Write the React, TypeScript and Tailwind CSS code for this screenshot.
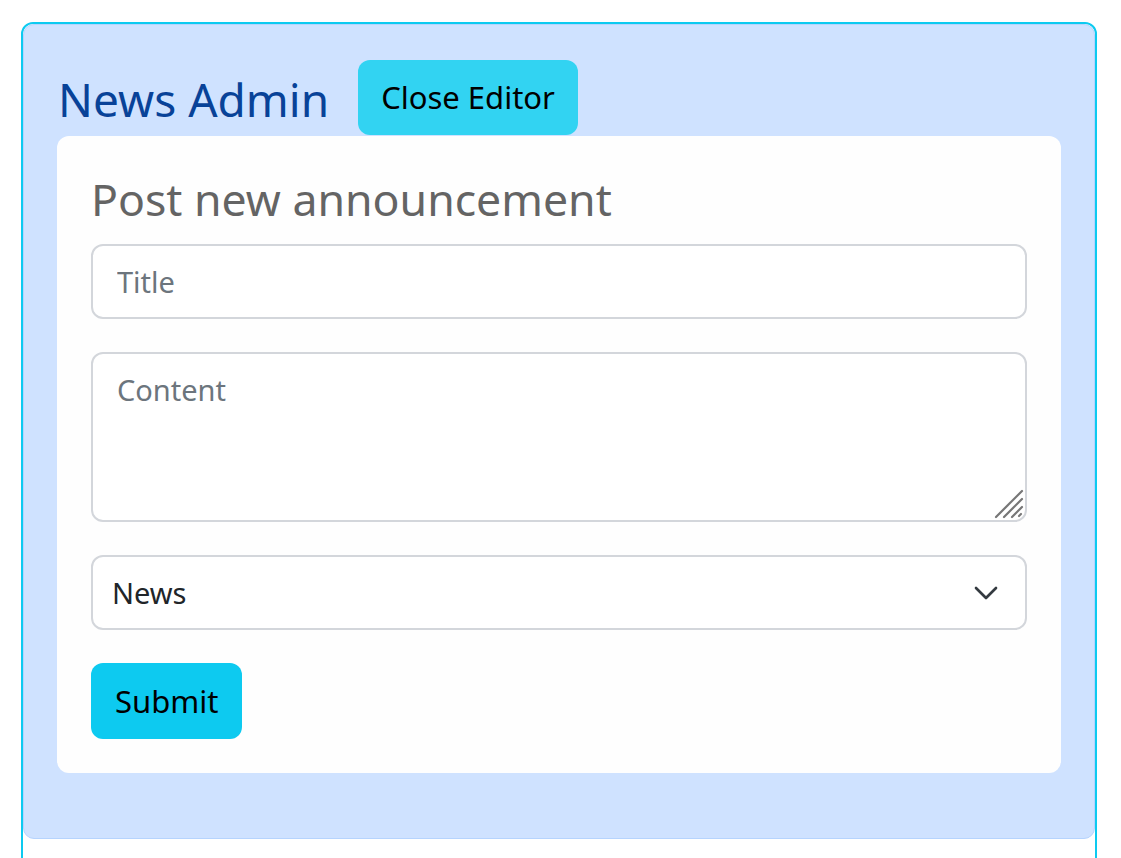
import { useState } from 'react';

const font = { fontFamily: '"Noto Sans", "Open Sans", sans-serif' };

function ResizeGrip() {
  return (
    <svg
      className="pointer-events-none absolute right-[3px] bottom-[3px]"
      width="30"
      height="30"
      viewBox="0 0 30 30"
    >
      <g stroke="#777" strokeWidth="2.2" strokeLinecap="round">
        <line x1="2" y1="28" x2="28" y2="2" />
        <line x1="10" y1="28" x2="28" y2="10" />
        <line x1="18" y1="28" x2="28" y2="18" />
        <line x1="25" y1="27" x2="27" y2="25" />
      </g>
    </svg>
  );
}

export default function App() {
  const [category, setCategory] = useState('News');

  return (
    <div className="h-[858px] bg-white overflow-hidden" style={font}>
      <div className="ml-[21px] mt-[22px] w-[1076px] h-[850px] rounded-[12px] border-2 border-[#0dcaf0]">
        <div className="rounded-[11px] border border-[#b6d4fe] bg-[#cfe2ff] px-[33px] pt-[32px] pb-[65px]">
          <div className="flex items-end h-[79px]">
            <h2 className="text-[#084298] text-[46px] leading-none pb-[14px] pl-[1px]">News Admin</h2>
            <button className="ml-[29px] mb-[1px] h-[75px] px-[23px] rounded-[12px] bg-[#32d3f2] text-black text-[31px]">
              Close Editor
            </button>
          </div>
          <div className="rounded-[12px] bg-[#fefefe] p-[34px]">
            <h3 className="text-[#646464] text-[44.6px] leading-[58px] mb-[16px]">Post new announcement</h3>
            <div className="flex flex-col gap-[33px]">
              <input
                placeholder="Title"
                className="h-[75px] w-full rounded-[12px] border-2 border-[#d3d6db] bg-white px-[24px] text-[29px] text-[#212529] placeholder:text-[#6c757d] outline-none"
              />
              <div className="relative">
                <textarea
                  placeholder="Content"
                  className="block h-[170px] w-full resize-none rounded-[12px] border-2 border-[#d3d6db] bg-white px-[24px] py-[14px] text-[29px] text-[#212529] placeholder:text-[#6c757d] outline-none"
                />
                <ResizeGrip />
              </div>
              <div className="relative">
                <select
                  value={category}
                  onChange={(e) => setCategory(e.target.value)}
                  className="h-[75px] w-full appearance-none rounded-[12px] border-2 border-[#d3d6db] bg-white pl-[19px] pr-[60px] text-[29px] text-[#212529] outline-none"
                >
                  <option>News</option>
                  <option>Event</option>
                  <option>Update</option>
                </select>
                <svg
                  className="pointer-events-none absolute right-[27px] top-[28px]"
                  width="28"
                  height="20"
                  viewBox="0 0 16 12"
                >
                  <path d="m2 3 6 6 6-6" fill="none" stroke="#343a40" strokeWidth="1.6" strokeLinecap="round" strokeLinejoin="round" />
                </svg>
              </div>
              <div>
                <button className="h-[76px] px-[24px] rounded-[12px] bg-[#0dcaf0] text-black text-[31px]">Submit</button>
              </div>
            </div>
          </div>
        </div>
      </div>
    </div>
  );
}
